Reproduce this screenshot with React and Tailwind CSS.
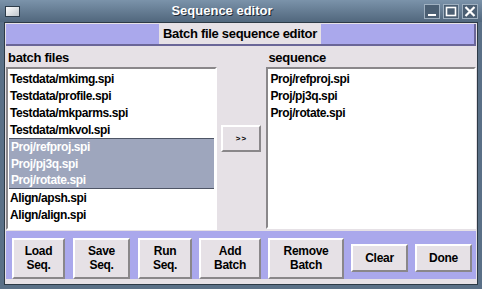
import React from "react";

const batchFiles = [
  "Testdata/mkimg.spi",
  "Testdata/profile.spi",
  "Testdata/mkparms.spi",
  "Testdata/mkvol.spi",
  "Proj/refproj.spi",
  "Proj/pj3q.spi",
  "Proj/rotate.spi",
  "Align/apsh.spi",
  "Align/align.spi",
];
const selected = [4, 5, 6];
const sequence = ["Proj/refproj.spi", "Proj/pj3q.spi", "Proj/rotate.spi"];

const raised =
  "bg-[#e6e1e6] border-2 border-t-white border-l-white border-b-[#8a878a] border-r-[#8a878a]";

const Btn = ({ children, className = "" }) => (
  <div
    className={`${raised} flex flex-col items-center justify-center leading-[14px] text-[12px] font-bold tracking-[-0.3px] text-black ${className}`}
  >
    {children}
  </div>
);

export default function App() {
  return (
    <div
      className="w-[482px] h-[289px] bg-[#5a7087] flex flex-col overflow-hidden"
      style={{ fontFamily: '"Liberation Sans", Arial, sans-serif' }}
    >
      {/* title bar */}
      <div className="h-[22px] flex items-center bg-gradient-to-b from-[#7b93aa] to-[#51677d]">
        <div className="ml-[5px] w-[15px] h-[11px] border border-[#2d3c4a] bg-gradient-to-br from-white to-[#bfc6cc]" />
        <div className="flex-1 text-center text-white font-bold text-[13px] [text-shadow:1px_1px_0_#1e2a36]">
          Sequence editor
        </div>
        <div className="flex gap-[3px] mr-[4px]">
          {["min", "max", "close"].map((k) => (
            <div
              key={k}
              className="w-[16px] h-[15px] border border-[#9fb0c0] bg-[#4b5f73] flex items-center justify-center"
            >
              <svg width="12" height="11" viewBox="0 0 12 11">
                {k === "min" && <rect x="2" y="8" width="8" height="2" fill="white" />}
                {k === "max" && (
                  <rect x="1.5" y="1.5" width="9" height="8" fill="none" stroke="white" strokeWidth="1.6" />
                )}
                {k === "close" && (
                  <path d="M1.5 1 L10.5 10 M10.5 1 L1.5 10" stroke="white" strokeWidth="2.2" />
                )}
              </svg>
            </div>
          ))}
        </div>
      </div>

      {/* body */}
      <div className="flex-1 mx-[4px] mb-[4px] border border-[#2d3a46] bg-[#e6e1e6] flex flex-col">
        {/* header band */}
        <div className="mx-[1px] mt-[1px] h-[22px] bg-[#aaa8ec] border-b-2 border-r-2 border-b-[#6a6698] border-r-[#6a6698] flex justify-center items-stretch">
          <div className="px-[4px] bg-[#e6e1e6] flex items-center font-bold text-[13px] tracking-[-0.3px] text-black">
            Batch file sequence editor
          </div>
        </div>

        {/* lists */}
        <div className="flex px-[1px] pt-[2px]">
          <div className="flex flex-col w-[211px]">
            <div className="h-[19px] pl-[2px] flex items-center font-bold text-[13px] tracking-[-0.3px] text-black">
              batch files
            </div>
            <div className="h-[163px] border-2 border-t-[#8a878a] border-l-[#8a878a] border-b-white border-r-white bg-white py-[1px]">
              {batchFiles.map((f, i) => (
                <div
                  key={f}
                  className={`h-[17px] flex items-center pl-[2px] text-[12px] font-bold tracking-[-0.4px] ${
                    selected.includes(i)
                      ? "bg-[#9ea6bd] text-white mx-[1px]"
                      : "text-black"
                  } ${i === 4 ? "border-t border-[#4e5566]" : ""} ${
                    i === 6 ? "border-b border-[#4e5566]" : ""
                  }`}
                >
                  {f}
                </div>
              ))}
            </div>
          </div>
          <div className="w-[50px] flex items-start justify-center pt-[77px]">
            <Btn className="w-[40px] h-[27px] !text-[8px] tracking-[1px]">&gt;&gt;</Btn>
          </div>
          <div className="flex flex-col w-[210px]">
            <div className="h-[19px] pl-[2px] flex items-center font-bold text-[13px] tracking-[-0.3px] text-black">
              sequence
            </div>
            <div className="h-[162px] border-2 border-t-[#8a878a] border-l-[#8a878a] border-b-white border-r-white bg-white py-[1px]">
              {sequence.map((f) => (
                <div key={f} className="h-[17px] flex items-center pl-[2px] text-[12px] font-bold tracking-[-0.4px] text-black">
                  {f}
                </div>
              ))}
            </div>
          </div>
        </div>

        {/* button bar */}
        <div className="h-[48px] mt-[1px] mx-[1px] bg-[#aaa8ec] flex items-center pl-[6px] pt-[6px] gap-[7px]">
          <Btn className="w-[53px] h-[41px]">
            <span>Load</span>
            <span>Seq.</span>
          </Btn>
          <Btn className="w-[57px] h-[41px] ml-[1px]">
            <span>Save</span>
            <span>Seq.</span>
          </Btn>
          <Btn className="w-[54px] h-[41px] ml-[1px]">
            <span>Run</span>
            <span>Seq.</span>
          </Btn>
          <Btn className="w-[62px] h-[41px]">
            <span>Add</span>
            <span>Batch</span>
          </Btn>
          <Btn className="w-[76px] h-[41px]">
            <span>Remove</span>
            <span>Batch</span>
          </Btn>
          <Btn className="w-[57px] h-[28px]">Clear</Btn>
          <Btn className="w-[57px] h-[28px]">Done</Btn>
        </div>
      </div>
    </div>
  );
}
